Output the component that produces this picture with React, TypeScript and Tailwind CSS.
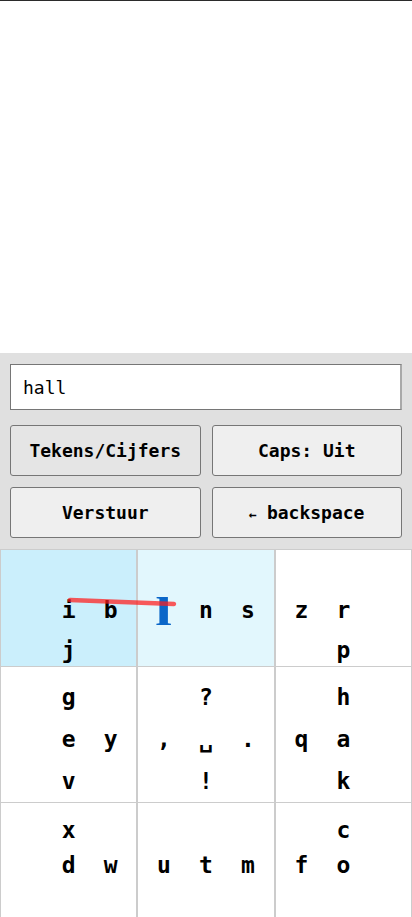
const mono = { fontFamily: '"DejaVu Sans Mono", "Liberation Mono", monospace' }
const serif = { fontFamily: '"Liberation Serif", "DejaVu Serif", serif' }

type Cell = { keys: string[][]; bg: string }

const rows: { h: string; lead: string; pad: string; cells: Cell[] }[] = [
  {
    h: 'h-[117px]',
    lead: 'h-[40px]',
    pad: '',
    cells: [
      { bg: 'bg-[#cbeffc]', keys: [['', '', ''], ['', 'i', 'b'], ['', 'j', '']] },
      { bg: 'bg-[#e2f7fd]', keys: [['', '', ''], ['L', 'n', 's'], ['', '', '']] },
      { bg: 'bg-white', keys: [['', '', ''], ['z', 'r', ''], ['', 'p', '']] },
    ],
  },
  {
    h: 'h-[136px]',
    lead: 'h-[42px]',
    pad: 'pt-[9px]',
    cells: [
      { bg: 'bg-white', keys: [['', 'g', ''], ['', 'e', 'y'], ['', 'v', '']] },
      { bg: 'bg-white', keys: [['', '?', ''], [',', '␣', '.'], ['', '!', '']] },
      { bg: 'bg-white', keys: [['', 'h', ''], ['q', 'a', ''], ['', 'k', '']] },
    ],
  },
  {
    h: 'h-[114px]',
    lead: 'h-[35px]',
    pad: 'pt-[10px]',
    cells: [
      { bg: 'bg-white', keys: [['', 'x', ''], ['', 'd', 'w'], ['', '', '']] },
      { bg: 'bg-white', keys: [['', '', ''], ['u', 't', 'm'], ['', '', '']] },
      { bg: 'bg-white', keys: [['', 'c', ''], ['f', 'o', ''], ['', '', '']] },
    ],
  },
]

function Key({ k, lead }: { k: string; lead: string }) {
  if (k === 'L') {
    // het geselecteerde teken
    return (
      <div className={`w-[42px] ${lead} flex items-center justify-center`}>
        <span
          className="inline-block scale-x-150 text-[40px] leading-none font-bold text-[#0a66c8] mt-[3px]"
          style={serif}
        >
          l
        </span>
      </div>
    )
  }
  return (
    <div className={`w-[42px] ${lead} flex items-center justify-center text-[23px] font-bold text-black`}>
      {k}
    </div>
  )
}

export default function App() {
  return (
    <div className="h-[917px] flex flex-col bg-white border-t border-b border-[#2b2b2b]" style={mono}>
      <div className="flex-1" />

      {/* invoer + knoppen */}
      <div className="bg-[#e0e0e0] px-[10px] pt-[11px] pb-[11px] flex flex-col">
        <div className="h-[46px] bg-white border border-[#767676] border-r-2 border-r-[#a9a9a9] flex items-center px-[12px] text-[18px] text-black">
          hall
        </div>
        <div className="grid grid-cols-2 gap-[11px] mt-[15px]">
          <button className="h-[51px] bg-[#e5e5e5] border border-[#767676] rounded-[3px] text-[18px] font-bold text-black">
            Tekens/Cijfers
          </button>
          <button className="h-[51px] bg-[#efefef] border border-[#767676] rounded-[3px] text-[18px] font-bold text-black">
            Caps: Uit
          </button>
          <button className="h-[51px] bg-[#efefef] border border-[#767676] rounded-[3px] text-[18px] font-bold text-black">
            Verstuur
          </button>
          <button className="h-[51px] bg-[#efefef] border border-[#767676] rounded-[3px] text-[18px] font-bold text-black">
            <span className="text-[13px] mr-[10px]">←</span>backspace
          </button>
        </div>
      </div>

      {/* toetsenbord */}
      <div className="relative flex flex-col">
        {rows.map((row, ri) => (
          <div key={ri} className={`grid grid-cols-3 ${row.h}`}>
            {row.cells.map((cell, ci) => (
              <div
                key={ci}
                className={`${cell.bg} border border-[#cccccc] flex flex-col items-center justify-center ${row.pad}`}
              >
                {cell.keys.map((line, li) => (
                  <div key={li} className="flex">
                    {line.map((k, ki) => (
                      <Key key={ki} k={k} lead={row.lead} />
                    ))}
                  </div>
                ))}
              </div>
            ))}
          </div>
        ))}
        <svg className="absolute left-0 top-0 pointer-events-none" width="412" height="120">
          <path
            d="M70 51 C 90 52, 120 53, 174 55"
            stroke="#ff1a1a"
            strokeOpacity="0.72"
            strokeWidth="4.5"
            strokeLinecap="round"
            fill="none"
          />
        </svg>
      </div>
    </div>
  )
}
